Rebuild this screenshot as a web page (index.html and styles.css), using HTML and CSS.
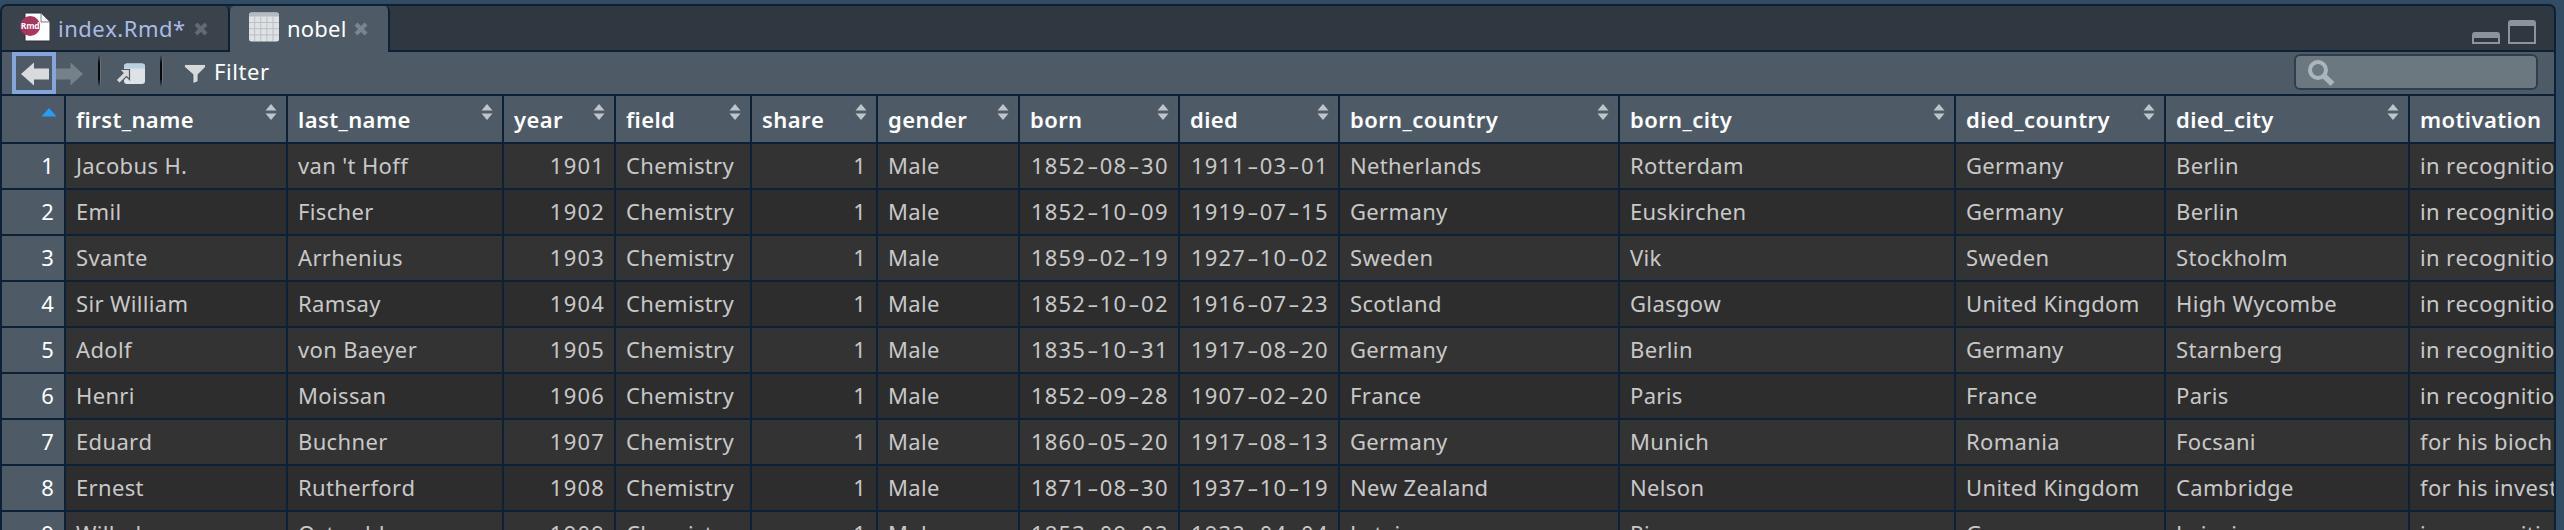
FILE: index.html
```html
<!DOCTYPE html>
<html lang="en">
<head>
<meta charset="utf-8">
<title>nobel</title>
<link rel="stylesheet" href="styles.css">
</head>
<body>
<main class="pane">
  <div class="tabbar">
    <div class="tab">
      <svg class="tab-icon rmd" width="30" height="30" viewBox="0 0 30 30">
        <path d="M5 1H21L30 10V29H5Z" fill="#fff" stroke="#2b3138" stroke-width="1"/>
        <path d="M21 1V10H30Z" fill="#f4f4f4" stroke="#5a6067" stroke-width=".8"/>
        <circle cx="10.200" cy="14" r="10" fill="#a9355c"/>
        <text x="10.200" y="16.500" text-anchor="middle" class="badge">Rmd</text>
      </svg>
      <span class="tab-name name-rmd">index.Rmd*</span>
      <svg class="close" width="14" height="14" viewBox="0 0 14 14"><path d="M2 2L12 12M12 2L2 12" stroke="#626a72" stroke-width="4"/></svg>
    </div>
    <div class="tab active">
      <svg class="tab-icon grid" width="30" height="30" viewBox="0 0 30 30">
        <rect width="30" height="29" y="0.500" rx="2.500" fill="#dfe2e5"/>
        <path d="M0 4.500V3Q0 .5 2.500 .5H27.500Q30 .5 30 3V4.500Z" fill="#b5bbc1"/>
        <path d="M5.700 4.500V29M11.800 4.500V29M17.900 4.500V29M24 4.500V29M0 10.500H30M0 16.700H30M0 22.900H30" stroke="#b9bfc5" stroke-width="1"/>
      </svg>
      <span class="tab-name name-nobel">nobel</span>
      <svg class="close" width="14" height="14" viewBox="0 0 14 14"><path d="M2 2L12 12M12 2L2 12" stroke="#7b858e" stroke-width="4"/></svg>
    </div>
    <svg class="window-buttons" width="64" height="24" viewBox="0 0 64 24">
      <path fill="#8b949c" fill-rule="evenodd" d="M0 24V15Q0 12 3 12H25Q28 12 28 15V24ZM2 18V22H26V18ZM36 24V3Q36 0 39 0H61Q64 0 64 3V24ZM38 6V22H62V6Z"/>
    </svg>
  </div>
  <div class="toolbar">
    <div class="back"><svg width="28" height="24" viewBox="0 0 28 24"><path d="M0 12L13 .5V6.500H28V17.500H13V23.500Z" fill="#d9dadc"/></svg></div>
    <svg class="forward" width="27" height="24" viewBox="0 0 27 24"><path d="M27 12L14.500 .5V6.500H0V17.500H14.500V23.500Z" fill="#768088"/></svg>
    <span class="separator sep-one"></span>
    <svg class="popout" width="30" height="22" viewBox="0 0 30 22">
      <rect x="8" y="0.500" width="21" height="20.500" rx="3" fill="#dfe3e7"/>
      <path d="M8 5.500V3.500Q8 .5 11 .5H26Q29 .5 29 3.500V5.500Z" fill="#b9d0e2"/>
      <path d="M3.500 6.500H13.500V16.500L10.500 13.500L3.500 20.500L0 17L7 10Z" fill="#d6d9dc" stroke="#4e5b66" stroke-width="1.200"/>
    </svg>
    <span class="separator sep-two"></span>
    <svg class="funnel" width="22" height="20" viewBox="0 0 22 20"><path d="M.5 .5H21.500V3L14 10.500V17.500L9 19.500V10.500L.5 3Z" fill="#d6d9db" stroke="#3d4751" stroke-width=".7"/></svg>
    <span class="filter">Filter</span>
    <div class="search">
      <svg width="28" height="28" viewBox="0 0 28 28"><circle cx="10" cy="10" r="8" fill="none" stroke="#acb5ba" stroke-width="4"/><path d="M15.500 15.500L24.500 24" stroke="#acb5ba" stroke-width="5.500"/></svg>
    </div>
  </div>
  <div class="table" id="table"></div>
</main>
<script src="table.js"></script>
</body>
</html>
```
FILE: styles.css
```css
* { box-sizing: border-box; }
body {
  margin: 0;
  height: 530px;
  overflow: hidden;
  background: #324c64;
  padding-top: 4px;
  font: 22px/28px "Noto Sans", "Open Sans", sans-serif;
  font-kerning: none;
}
.pane {
  width: 2556px;
  height: 540px;
  border: 2px solid #0c2135;
  border-radius: 7px 7px 0 0;
  background: #0c2135;
  overflow: hidden;
}
.tabbar {
  display: flex;
  height: 46px;
  background: #2f3841;
  border-bottom: 2px solid #0c2135;
}
.tab {
  display: flex;
  align-items: flex-start;
  width: 228px;
  height: 44px;
  padding: 6px 0 0 18px;
  background: #3a434c;
  border-right: 2px solid #0c2135;
  border-radius: 5px 5px 0 0;
}
.tab.active {
  width: 160px;
  height: 46px;
  padding-left: 19px;
  background: #4e5b66;
}
.tab-icon { flex: none; }
.badge { font: bold 8.500px "Open Sans", sans-serif; fill: #fff; letter-spacing: -.2px; }
.tab-name { line-height: 30px; margin-top: 1px; margin-left: 8px; white-space: nowrap; }
.name-rmd { width: 127px; color: #a9bbe4; letter-spacing: .5px; }
.name-nobel { width: 58px; margin-left: 8px; color: #fff; letter-spacing: .2px; }
.close { margin-top: 10px; margin-left: 9px; flex: none; }
.window-buttons { margin: 14px 18px 0 auto; }
.toolbar {
  display: flex;
  height: 44px;
  padding-left: 10px;
  background: #4e5b66;
  border-bottom: 2px solid #0c2135;
}
.back { width: 44px; height: 42px; border: 4px solid #86a5dc; padding: 6px 0 0 5px; line-height: 0; }
.forward { margin-top: 10px; }
.separator { width: 3px; height: 32px; margin-top: 3px; background: linear-gradient(90deg, #000 0 67%, #6b767f 67%); opacity: .9; -webkit-mask: linear-gradient(transparent, #000 25%, #000 75%, transparent); }
.sep-one { margin-left: 15px; }
.popout { margin: 11px 0 0 15px; }
.sep-two { margin-left: 14px; }
.funnel { margin: 12px 0 0 21px; }
.filter { margin: 4px 0 0 8px; line-height: 30px; color: #fff; letter-spacing: .6px; }
.search {
  width: 244px;
  height: 36px;
  margin: 2px 16px 0 auto;
  padding: 4px 0 0 12px;
  border: 2px solid #2f3d4e;
  border-radius: 6px;
  background: #6c7880;
  line-height: 0;
}
.table {
  display: grid;
  grid-template-columns: 62px 220px 214px 110px 134px 124px 140px 158px 158px 278px 334px 208px 242px 144px;
  grid-template-rows: 46px;
  grid-auto-rows: 44px;
  gap: 2px;
}
.cell {
  padding: 7px 10px 0;
  overflow: hidden;
  white-space: nowrap;
  color: #c8c8c8;
  background: #333;
  letter-spacing: .35px;
}
.cell.even { background: #2d2d2d; }
.cell.num { text-align: right; letter-spacing: 1.200px; padding-right: 9px; }
.cell.date { letter-spacing: 1.200px; padding-left: 11px; padding-right: 0; }
.cell.index { color: #fff; background: #4e5b66; }
.head {
  display: flex;
  justify-content: space-between;
  padding: 9px 9px 0 10px;
  overflow: hidden;
  background: #4e5b66;
  color: #fff;
  font-weight: 600;
  letter-spacing: .4px;
}
.head svg { flex: none; margin-top: -2px; }
.head.first { padding: 12px 7px 0 0; justify-content: flex-end; }
.head.first svg { margin: 0; }
.dash { display: inline-block; width: 13.700px; text-align: center; letter-spacing: 0; transform: scaleX(1.600); }
```
FILE: table.js
```js
const columns = ["first_name", "last_name", "year", "field", "share", "gender", "born", "died", "born_country", "born_city", "died_country", "died_city", "motivation"];
const rows = [
  ["Jacobus H.", "van 't Hoff", "1901", "Chemistry", "1", "Male", "1852-08-30", "1911-03-01", "Netherlands", "Rotterdam", "Germany", "Berlin", "in recognitio"],
  ["Emil", "Fischer", "1902", "Chemistry", "1", "Male", "1852-10-09", "1919-07-15", "Germany", "Euskirchen", "Germany", "Berlin", "in recognitio"],
  ["Svante", "Arrhenius", "1903", "Chemistry", "1", "Male", "1859-02-19", "1927-10-02", "Sweden", "Vik", "Sweden", "Stockholm", "in recognitio"],
  ["Sir William", "Ramsay", "1904", "Chemistry", "1", "Male", "1852-10-02", "1916-07-23", "Scotland", "Glasgow", "United Kingdom", "High Wycombe", "in recognitio"],
  ["Adolf", "von Baeyer", "1905", "Chemistry", "1", "Male", "1835-10-31", "1917-08-20", "Germany", "Berlin", "Germany", "Starnberg", "in recognitio"],
  ["Henri", "Moissan", "1906", "Chemistry", "1", "Male", "1852-09-28", "1907-02-20", "France", "Paris", "France", "Paris", "in recognitio"],
  ["Eduard", "Buchner", "1907", "Chemistry", "1", "Male", "1860-05-20", "1917-08-13", "Germany", "Munich", "Romania", "Focsani", "for his bioch"],
  ["Ernest", "Rutherford", "1908", "Chemistry", "1", "Male", "1871-08-30", "1937-10-19", "New Zealand", "Nelson", "United Kingdom", "Cambridge", "for his invest"],
  ["Wilhelm", "Ostwald", "1909", "Chemistry", "1", "Male", "1853-09-02", "1932-04-04", "Latvia", "Riga", "Germany", "Leipzig", "in recognitio"]
];
const sorter = '<svg width="12" height="18" viewBox="0 0 12 18"><path d="M6 1L11.500 7.500H.5ZM6 17L11.500 10.500H.5Z" fill="#c0c5ca"/></svg>';
let html = '<div class="head first"><svg width="16" height="9" viewBox="0 0 16 9"><path d="M8 0L15.500 8.500H.5Z" fill="#2b9bf0"/></svg></div>';
columns.forEach((name, i) => {
  html += `<div class="head"><span>${name}</span>${i < 12 ? sorter : ""}</div>`;
});
rows.forEach((row, r) => {
  const shade = r % 2 ? " even" : "";
  html += `<div class="cell num index">${r + 1}</div>`;
  row.forEach((value, c) => {
    const kind = c === 2 || c === 4 ? " num" : c === 6 || c === 7 ? " date" : "";
    const text = kind === " date" ? value.replace(/-/g, '<span class="dash">-</span>') : value;
    html += `<div class="cell${kind}${shade}">${text}</div>`;
  });
});
document.getElementById("table").innerHTML = html;
```
